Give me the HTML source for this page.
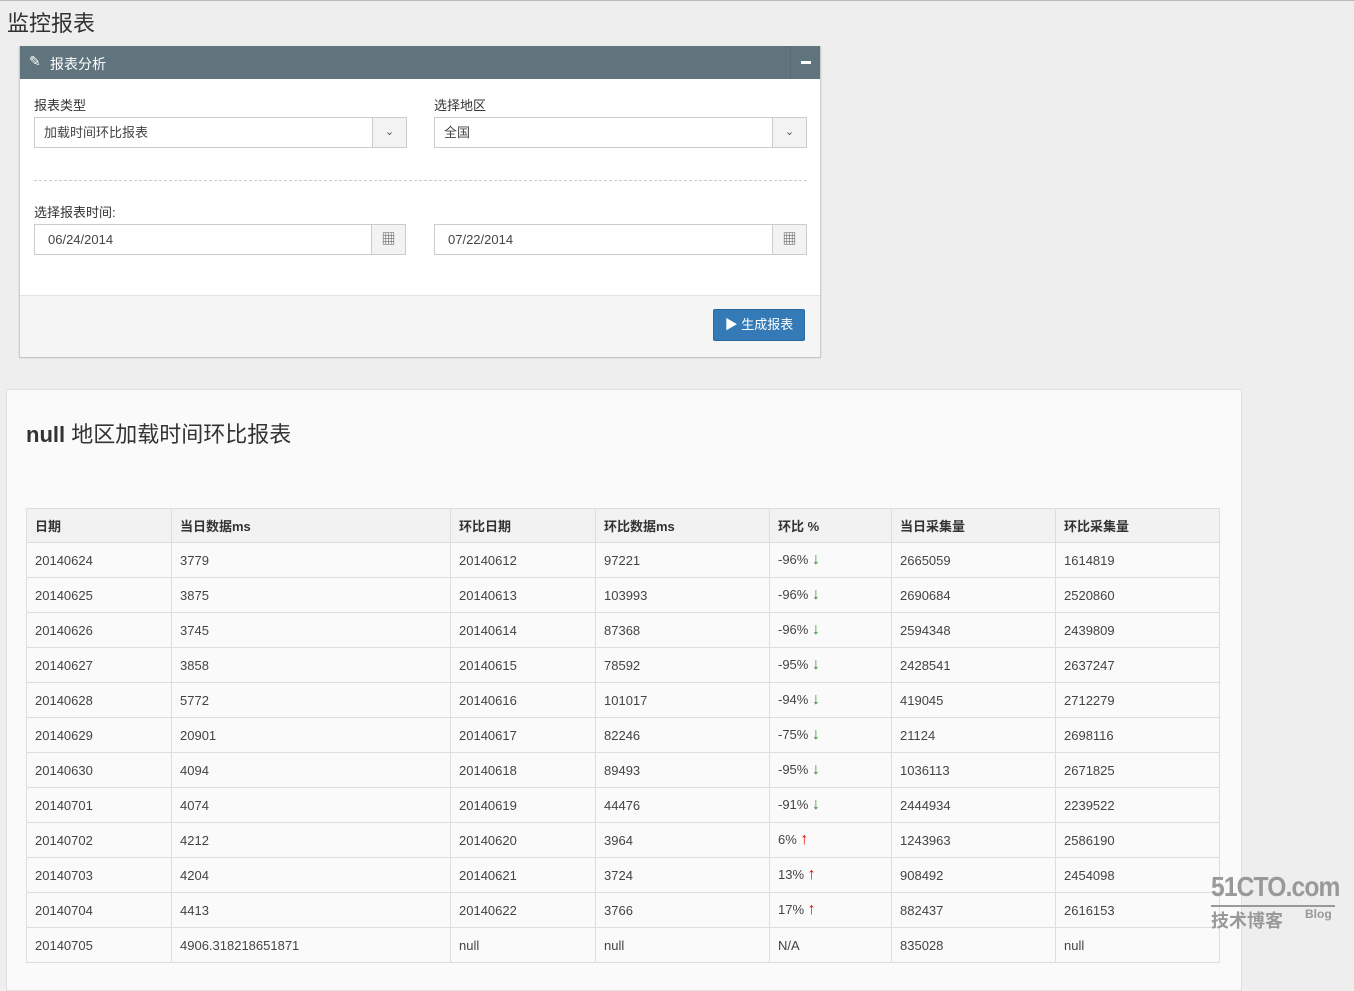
<!DOCTYPE html>
<html><head><meta charset="utf-8"><style>
body{margin:0;width:1354px;height:946px;overflow:hidden;background:#eeeeee;font-family:"Liberation Sans","Noto Sans CJK SC",sans-serif;color:#333;position:relative;border-top:1px solid #bbb;box-sizing:border-box}
.abs{position:absolute}
h1{position:absolute;left:7px;top:5px;margin:0;font-weight:normal;font-size:22px;color:#333}
.w{left:19px;top:45px;width:800px;height:310px;border:1px solid #ccc;border-top:none;background:#fff;box-shadow:0 1px 1px #bbb}
.wh{left:0;top:0;width:800px;height:33px;background:#5f747d;color:#fff;font-size:14px}
.lbl{font-size:13px;color:#333}
.inp{height:31px;border:1px solid #ccc;background:#fff;box-sizing:border-box;font-size:13px;color:#444;line-height:29px;padding-left:9px}
.addon{position:absolute;right:0;top:0;width:33px;height:29px;border-left:1px solid #ccc;background:#f3f3f3;text-align:center;color:#555;font-size:11px}
.foot{left:0;top:249px;width:800px;height:61px;background:#f5f5f5;border-top:1px solid #e2e2e2}
.btn{left:693px;top:13px;width:90px;height:30px;background:#337ab7;border:1px solid #2a6aa3;color:#fff;font-size:13px;line-height:30px;text-align:center;border-radius:2px}
.rp{left:6px;top:388px;width:1234px;height:600px;background:#fafafa;border:1px solid #e0e0e0}
table{position:absolute;left:26px;top:507px;border-collapse:collapse;font-size:13px;color:#444}
td,th{border:1px solid #ddd;height:35px;padding:0 8px;text-align:left;box-sizing:border-box}
th{background:#f2f2f2;font-weight:bold;color:#333;height:34px}
.dn{color:#2a8a2a;font-weight:bold;font-size:16px}.up{color:#d00;font-weight:bold;font-size:16px}
</style></head><body>
<h1>监控报表</h1>
<div class="abs w">
 <div class="abs wh"><span class="abs" style="left:9px;top:7px;font-size:14px">&#9998;</span><span class="abs" style="left:30px;top:8px">报表分析</span>
 <div class="abs" style="left:770px;top:0;width:30px;height:33px;border-left:1px solid #566a72"><div class="abs" style="left:10px;top:15px;width:10px;height:3px;background:#fff"></div></div></div>
 <div class="abs lbl" style="left:14px;top:49px">报表类型</div>
 <div class="abs lbl" style="left:414px;top:49px">选择地区</div>
 <div class="abs inp" style="left:14px;top:71px;width:373px">加载时间环比报表<div class="addon">&#8964;</div></div>
 <div class="abs inp" style="left:414px;top:71px;width:373px">全国<div class="addon">&#8964;</div></div>
 <div class="abs" style="left:14px;top:134px;width:773px;border-top:1px dashed #ccc"></div>
 <div class="abs lbl" style="left:14px;top:156px">选择报表时间:</div>
 <div class="abs inp" style="left:14px;top:178px;width:372px;padding-left:13px">06/24/2014<div class="addon" style="font-size:14px">&#9638;</div></div>
 <div class="abs inp" style="left:414px;top:178px;width:373px;padding-left:13px">07/22/2014<div class="addon" style="font-size:14px">&#9638;</div></div>
 <div class="abs foot"><div class="abs btn">&#9654; 生成报表</div></div>
</div>
<div class="abs rp"></div>
<div class="abs" style="left:26px;top:416px;font-size:22px;color:#333"><b>null</b> 地区加载时间环比报表</div>
<table>
<tr><th style="width:145px">日期</th><th style="width:279px">当日数据ms</th><th style="width:145px">环比日期</th><th style="width:174px">环比数据ms</th><th style="width:122px">环比 %</th><th style="width:164px">当日采集量</th><th style="width:164px">环比采集量</th></tr>
<tr><td>20140624</td><td>3779</td><td>20140612</td><td>97221</td><td>-96% <span class="dn">&#8595;</span></td><td>2665059</td><td>1614819</td></tr>
<tr><td>20140625</td><td>3875</td><td>20140613</td><td>103993</td><td>-96% <span class="dn">&#8595;</span></td><td>2690684</td><td>2520860</td></tr>
<tr><td>20140626</td><td>3745</td><td>20140614</td><td>87368</td><td>-96% <span class="dn">&#8595;</span></td><td>2594348</td><td>2439809</td></tr>
<tr><td>20140627</td><td>3858</td><td>20140615</td><td>78592</td><td>-95% <span class="dn">&#8595;</span></td><td>2428541</td><td>2637247</td></tr>
<tr><td>20140628</td><td>5772</td><td>20140616</td><td>101017</td><td>-94% <span class="dn">&#8595;</span></td><td>419045</td><td>2712279</td></tr>
<tr><td>20140629</td><td>20901</td><td>20140617</td><td>82246</td><td>-75% <span class="dn">&#8595;</span></td><td>21124</td><td>2698116</td></tr>
<tr><td>20140630</td><td>4094</td><td>20140618</td><td>89493</td><td>-95% <span class="dn">&#8595;</span></td><td>1036113</td><td>2671825</td></tr>
<tr><td>20140701</td><td>4074</td><td>20140619</td><td>44476</td><td>-91% <span class="dn">&#8595;</span></td><td>2444934</td><td>2239522</td></tr>
<tr><td>20140702</td><td>4212</td><td>20140620</td><td>3964</td><td>6% <span class="up">&#8593;</span></td><td>1243963</td><td>2586190</td></tr>
<tr><td>20140703</td><td>4204</td><td>20140621</td><td>3724</td><td>13% <span class="up">&#8593;</span></td><td>908492</td><td>2454098</td></tr>
<tr><td>20140704</td><td>4413</td><td>20140622</td><td>3766</td><td>17% <span class="up">&#8593;</span></td><td>882437</td><td>2616153</td></tr>
<tr><td>20140705</td><td>4906.318218651871</td><td>null</td><td>null</td><td>N/A</td><td>835028</td><td>null</td></tr>
</table>
<div class="abs" style="left:1211px;top:870px;font-size:28px;font-weight:bold;color:#999;transform:scaleX(0.88);transform-origin:0 0;letter-spacing:-1px">51CTO.com</div>
<div class="abs" style="left:1211px;top:904px;width:124px;border-top:2px solid #999"></div>
<div class="abs" style="left:1211px;top:906px;font-size:18px;font-weight:bold;color:#999">技术博客</div>
<div class="abs" style="left:1305px;top:906px;font-size:12px;font-weight:bold;color:#999">Blog</div>
</body></html>
